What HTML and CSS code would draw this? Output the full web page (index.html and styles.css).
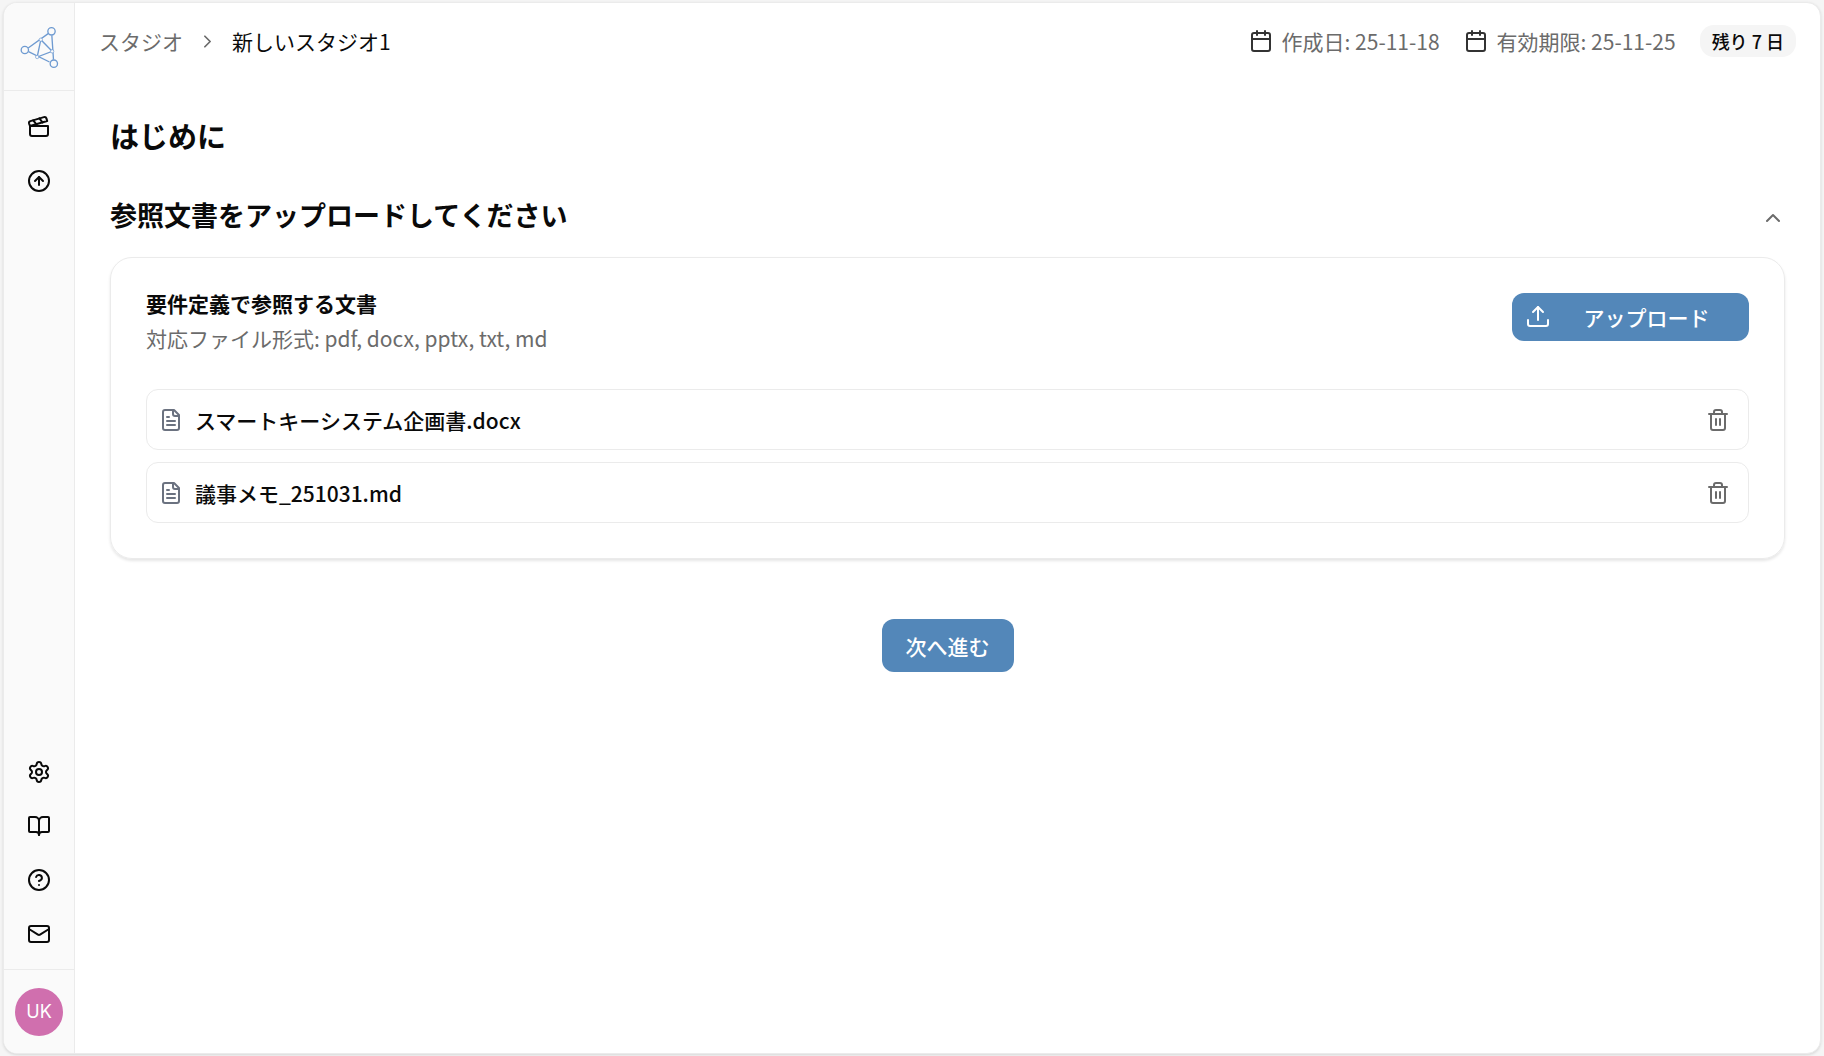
FILE: index.html
```
<!DOCTYPE html>
<html lang="ja">
<head>
  <meta charset="UTF-8" />
  <meta name="viewport" content="width=device-width, initial-scale=1.0"/>
  <title>新しいスタジオ1</title>
  <link rel="stylesheet" href="styles.css">
</head>
<body>

  <div class="app">
    <aside class="sidebar">
      <a class="logo" href="#" aria-label="ホーム">
        <svg viewBox="60 75 116 126" width="39" height="42" fill="none" stroke="#6f9bd1" stroke-width="4">
          <path d="M144 98L84 141M85 152L148 183M155 103L160 176"/>
          <path d="M122 116L111 168L156 151Z"/>
          <g fill="#fafafa">
            <circle cx="154" cy="91" r="11"/>
            <circle cx="74" cy="147" r="11"/>
            <circle cx="161" cy="188" r="11"/>
          </g>
          <g fill="#fafafa" stroke-width="2">
            <circle cx="122" cy="116" r="5"/>
            <circle cx="156" cy="151" r="5"/>
            <circle cx="111" cy="168" r="5"/>
          </g>
        </svg>
      </a>

      <nav class="side-nav">
        <a href="#" aria-label="スタジオ">
          <svg class="icon" viewBox="0 0 24 24"><path d="M20.2 6 3 11l-.9-2.4c-.3-1.1.3-2.2 1.3-2.5l13.5-4c1.1-.3 2.2.3 2.5 1.3Z"/><path d="m6.2 5.3 3.1 3.9"/><path d="m12.4 3.4 3.1 4"/><path d="M3 11h18v8a2 2 0 0 1-2 2H5a2 2 0 0 1-2-2Z"/></svg>
        </a>
        <a href="#" aria-label="アップグレード">
          <svg class="icon" viewBox="0 0 24 24"><circle cx="12" cy="12" r="10"/><path d="m16 12-4-4-4 4"/><path d="M12 16V8"/></svg>
        </a>
      </nav>

      <nav class="side-nav side-nav-bottom">
        <a href="#" aria-label="設定">
          <svg class="icon" viewBox="0 0 24 24"><path d="M9.671 4.136a2.34 2.34 0 0 1 4.659 0 2.34 2.34 0 0 0 3.319 1.915 2.34 2.34 0 0 1 2.33 4.033 2.34 2.34 0 0 0 0 3.831 2.34 2.34 0 0 1-2.33 4.033 2.34 2.34 0 0 0-3.319 1.915 2.34 2.34 0 0 1-4.659 0 2.34 2.34 0 0 0-3.32-1.915 2.34 2.34 0 0 1-2.33-4.033 2.34 2.34 0 0 0 0-3.831A2.34 2.34 0 0 1 6.35 6.051a2.34 2.34 0 0 0 3.319-1.915"/><circle cx="12" cy="12" r="3"/></svg>
        </a>
        <a href="#" aria-label="ガイド">
          <svg class="icon" viewBox="0 0 24 24"><path d="M12 7v14"/><path d="M3 18a1 1 0 0 1-1-1V4a1 1 0 0 1 1-1h5a4 4 0 0 1 4 4 4 4 0 0 1 4-4h5a1 1 0 0 1 1 1v13a1 1 0 0 1-1 1h-6a3 3 0 0 0-3 3 3 3 0 0 0-3-3z"/></svg>
        </a>
        <a href="#" aria-label="ヘルプ">
          <svg class="icon" viewBox="0 0 24 24"><circle cx="12" cy="12" r="10"/><path d="M9.09 9a3 3 0 0 1 5.83 1c0 2-3 3-3 3"/><path d="M12 17h.01"/></svg>
        </a>
        <a href="#" aria-label="お問い合わせ">
          <svg class="icon" viewBox="0 0 24 24"><rect x="2" y="4" width="20" height="16" rx="2"/><path d="m22 7-8.97 5.7a1.94 1.94 0 0 1-2.06 0L2 7"/></svg>
        </a>
      </nav>

      <div class="account">
        <button class="avatar" type="button">UK</button>
      </div>
    </aside>

    <div class="page">
      <header class="topbar">
        <nav class="breadcrumb">
          <a href="#">スタジオ</a>
          <svg class="icon icon-sep" viewBox="0 0 24 24"><path d="m9 18 6-6-6-6"/></svg>
          <span>新しいスタジオ1</span>
        </nav>
        <div class="meta">
          <div class="date">
            <svg class="icon" viewBox="0 0 24 24"><path d="M8 2v4"/><path d="M16 2v4"/><rect x="3" y="4" width="18" height="18" rx="2"/><path d="M3 10h18"/></svg>
            <span>作成日: 25-11-18</span>
          </div>
          <div class="date">
            <svg class="icon" viewBox="0 0 24 24"><path d="M8 2v4"/><path d="M16 2v4"/><rect x="3" y="4" width="18" height="18" rx="2"/><path d="M3 10h18"/></svg>
            <span>有効期限: 25-11-25</span>
          </div>
          <span class="badge">残り 7 日</span>
        </div>
      </header>

      <main class="content">
        <h1>はじめに</h1>

        <section>
          <div class="section-head">
            <h2>参照文書をアップロードしてください</h2>
            <button class="icon-button" type="button" aria-label="折りたたむ">
              <svg class="icon" viewBox="0 0 24 24"><path d="m18 15-6-6-6 6"/></svg>
            </button>
          </div>

          <div class="card">
            <div class="card-head">
              <div>
                <h3>要件定義で参照する文書</h3>
                <p>対応ファイル形式: pdf, docx, pptx, txt, md</p>
              </div>
              <button class="button upload" type="button">
                <svg class="icon" viewBox="0 0 24 24"><path d="M2 15v4a2 2 0 0 0 2 2h16a2 2 0 0 0 2-2v-4"/><path d="m17 7-5-5-5 5"/><path d="M12 2v13"/></svg>
                <span>アップロード</span>
              </button>
            </div>

            <ul class="files">
              <li>
                <svg class="icon icon-file" viewBox="0 0 24 24"><path d="M15 2H6a2 2 0 0 0-2 2v16a2 2 0 0 0 2 2h12a2 2 0 0 0 2-2V7Z"/><path d="M14 2v4a2 2 0 0 0 2 2h4"/><path d="M10 9H8"/><path d="M16 13H8"/><path d="M16 17H8"/></svg>
                <span>スマートキーシステム企画書.docx</span>
                <button class="icon-button" type="button" aria-label="削除">
                  <svg class="icon" viewBox="0 0 24 24"><path d="M3 6h18"/><path d="M19 6v14a2 2 0 0 1-2 2H7a2 2 0 0 1-2-2V6"/><path d="M8 6V4a2 2 0 0 1 2-2h4a2 2 0 0 1 2 2v2"/><path d="M10 11v6"/><path d="M14 11v6"/></svg>
                </button>
              </li>
              <li>
                <svg class="icon icon-file" viewBox="0 0 24 24"><path d="M15 2H6a2 2 0 0 0-2 2v16a2 2 0 0 0 2 2h12a2 2 0 0 0 2-2V7Z"/><path d="M14 2v4a2 2 0 0 0 2 2h4"/><path d="M10 9H8"/><path d="M16 13H8"/><path d="M16 17H8"/></svg>
                <span>議事メモ_251031.md</span>
                <button class="icon-button" type="button" aria-label="削除">
                  <svg class="icon" viewBox="0 0 24 24"><path d="M3 6h18"/><path d="M19 6v14a2 2 0 0 1-2 2H7a2 2 0 0 1-2-2V6"/><path d="M8 6V4a2 2 0 0 1 2-2h4a2 2 0 0 1 2 2v2"/><path d="M10 11v6"/><path d="M14 11v6"/></svg>
                </button>
              </li>
            </ul>
          </div>
        </section>

        <button class="button next" type="button">次へ進む</button>
      </main>
    </div>
  </div>

</body>
</html>
```

FILE: styles.css
```
:root {
  --bg: #f5f5f5;
  --panel: #fafafa;
  --border: #ebebeb;
  --text: #0a0a0a;
  --muted: #6b6b6b;
  --accent: #5387b9;
  --avatar: #d06fae;
}

* {
  box-sizing: border-box;
}

body {
  margin: 0;
  padding: 2px 3px;
  min-height: 100vh;
  display: flex;
  background: var(--bg);
  color: var(--text);
  font-family: "Noto Sans CJK JP", sans-serif;
  font-size: 21px;
  line-height: 30px;
}

h1, h2, h3, p, ul {
  margin: 0;
  padding: 0;
}

a {
  color: inherit;
  text-decoration: none;
}

button {
  border: none;
  padding: 0;
  font: inherit;
  cursor: pointer;
}

.icon {
  width: 24px;
  height: 24px;
  flex: none;
  fill: none;
  stroke: currentColor;
  stroke-width: 2;
  stroke-linecap: round;
  stroke-linejoin: round;
}

.app {
  flex: 1;
  display: flex;
  overflow: hidden;
  background: #fff;
  border: 1px solid var(--border);
  border-radius: 14px;
  box-shadow: 0 1px 3px rgba(0, 0, 0, 0.12);
}

/* Sidebar */
.sidebar {
  width: 71px;
  flex: none;
  display: flex;
  flex-direction: column;
  background: var(--panel);
  border-right: 1px solid var(--border);
}

.logo {
  height: 88px;
  display: flex;
  align-items: center;
  justify-content: center;
  border-bottom: 1px solid var(--border);
}

.side-nav {
  display: flex;
  flex-direction: column;
  align-items: center;
  gap: 6px;
  padding: 12px 0;
}

.side-nav a {
  display: flex;
  padding: 12px;
}

.side-nav-bottom {
  margin-top: auto;
  padding-bottom: 11px;
}

.account {
  display: flex;
  justify-content: center;
  padding: 18px 0 17px;
  border-top: 1px solid var(--border);
}

.avatar {
  width: 48px;
  height: 48px;
  border-radius: 50%;
  background: var(--avatar);
  color: #fff;
  font-family: Inter, sans-serif;
  font-size: 18px;
}

/* Top bar */
.page {
  flex: 1;
  min-width: 0;
}

.topbar {
  display: flex;
  align-items: center;
  justify-content: space-between;
  padding: 22px 24px;
}

.breadcrumb, .meta, .date {
  display: flex;
  align-items: center;
}

.breadcrumb {
  gap: 14px;
}

.breadcrumb a, .date {
  color: var(--muted);
}

.icon-sep {
  width: 21px;
  height: 21px;
  color: var(--muted);
}

.meta {
  gap: 24px;
}

.date {
  gap: 9px;
}

.date .icon {
  color: #333;
}

.badge {
  padding: 0 12px;
  border-radius: 14px;
  background: var(--bg);
  font-size: 18px;
  font-weight: 500;
  line-height: 32px;
}

/* Content */
.content {
  display: flex;
  flex-direction: column;
  padding: 35px;
}

h1 {
  font-size: 29px;
  font-weight: 700;
  line-height: 42px;
}

.section-head {
  display: flex;
  align-items: flex-end;
  justify-content: space-between;
  margin-top: 38px;
}

h2 {
  font-size: 27px;
  font-weight: 700;
  line-height: 42px;
}

.icon-button {
  display: flex;
  background: none;
  color: var(--muted);
}

.section-head .icon-button {
  padding-bottom: 6px;
}

.card {
  margin-top: 21px;
  padding: 35px;
  border: 1px solid var(--border);
  border-radius: 22px;
  box-shadow: 0 2px 3px rgba(0, 0, 0, 0.1);
}

.card-head {
  display: flex;
  align-items: flex-start;
  justify-content: space-between;
}

h3 {
  font-size: 21px;
  font-weight: 700;
  line-height: 21px;
}

.card-head p {
  margin-top: 9px;
  color: var(--muted);
}

.button {
  border-radius: 12px;
  background: var(--accent);
  color: #fff;
  font-weight: 500;
}

.upload {
  width: 237px;
  height: 48px;
  display: flex;
  align-items: center;
  gap: 12px;
  padding: 0 18px 0 14px;
}

.upload span {
  flex: 1;
}

.files {
  display: flex;
  flex-direction: column;
  gap: 12px;
  margin-top: 36px;
  list-style: none;
}

.files li {
  display: flex;
  align-items: center;
  gap: 12px;
  padding: 15px 18px 14px 12px;
  border: 1px solid var(--border);
  border-radius: 12px;
  font-weight: 500;
}

.files span {
  flex: 1;
}

.icon-file {
  color: #6b7280;
}

.next {
  align-self: center;
  margin-top: 60px;
  padding: 12px 24px 11px;
}
```
